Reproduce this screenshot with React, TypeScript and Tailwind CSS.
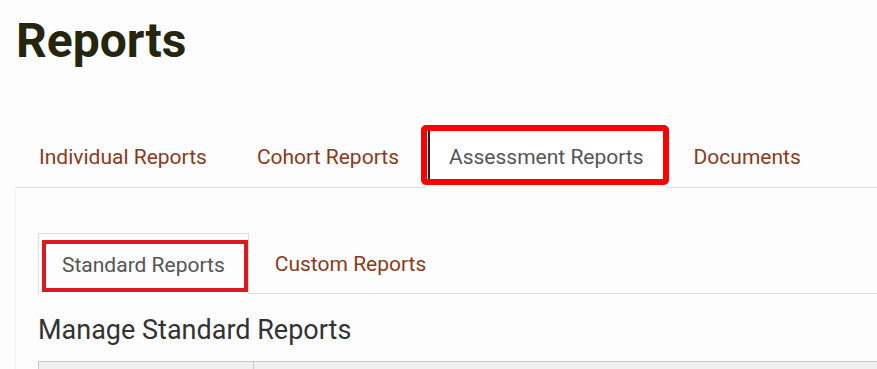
import React from 'react';

const topTabs = ['Individual Reports', 'Cohort Reports', 'Assessment Reports', 'Documents'];
const subTabs = ['Standard Reports', 'Custom Reports'];

export default function App() {
  return (
    <div className="w-[877px] h-[369px] overflow-hidden bg-[#fdfdfd] font-['Roboto',sans-serif]">
      <h1 className="pl-4 pt-[17px] text-[48px] leading-[48px] font-bold text-[#26260f]">Reports</h1>

      {/* Main tabs */}
      <ul className="ml-4 mt-[62px] flex gap-[4px] border-b border-[#dddddd] w-[1000px]">
        {topTabs.map((t) => {
          const active = t === 'Assessment Reports';
          return (
            <li
              key={t}
              className={
                active
                  ? 'relative -mb-px flex h-[61px] items-center bg-white px-[23px] pt-[2px] pb-px text-[21px] text-[#555555]'
                  : 'flex h-[60px] items-center px-[23px] pt-[2px] text-[21px] text-[#8a3a20]'
              }
            >
              {t}
              {active && (
                <>
                  <span className="absolute left-[2px] top-[4px] bottom-[8px] w-[2px] bg-[#222222]" />
                  <span className="pointer-events-none absolute -left-[5px] -top-[2px] -right-[2px] bottom-[3px] rounded-[5px] border-[6px] border-[#ff0000]" />
                </>
              )}
            </li>
          );
        })}
      </ul>

      {/* Panel */}
      <div className="ml-[15px] border-l border-[#f2f2f2] pl-[22px] pt-[45px] h-[200px]">
        <ul className="flex gap-[3px] border-b border-[#dddddd] w-[1000px]">
          {subTabs.map((t) => {
            const active = t === 'Standard Reports';
            return (
              <li
                key={t}
                className={
                  active
                    ? 'relative -mb-px flex h-[61px] items-center border border-b-0 border-[#dddddd] bg-[#fdfdfd] px-[23px] pt-[4px] text-[21px] text-[#555555]'
                    : 'flex h-[60px] items-center px-[23px] pt-[4px] text-[21px] text-[#8a3a20]'
                }
              >
                {t}
                {active && (
                  <span className="pointer-events-none absolute left-[3px] top-[6px] right-0 bottom-[2px] border-[4px] border-[#dc1820]" />
                )}
              </li>
            );
          })}
        </ul>

        <h3 className="mt-[23px] text-[27px] leading-[27px] text-[#333333]">Manage Standard Reports</h3>

        <table className="mt-[17px] w-[900px] border-collapse">
          <thead>
            <tr className="bg-[#f0f0f0]">
              <th className="h-[40px] w-[215px] border border-[#c8c8c8]"></th>
              <th className="h-[40px] border border-[#c8c8c8]"></th>
            </tr>
          </thead>
        </table>
      </div>
    </div>
  );
}
